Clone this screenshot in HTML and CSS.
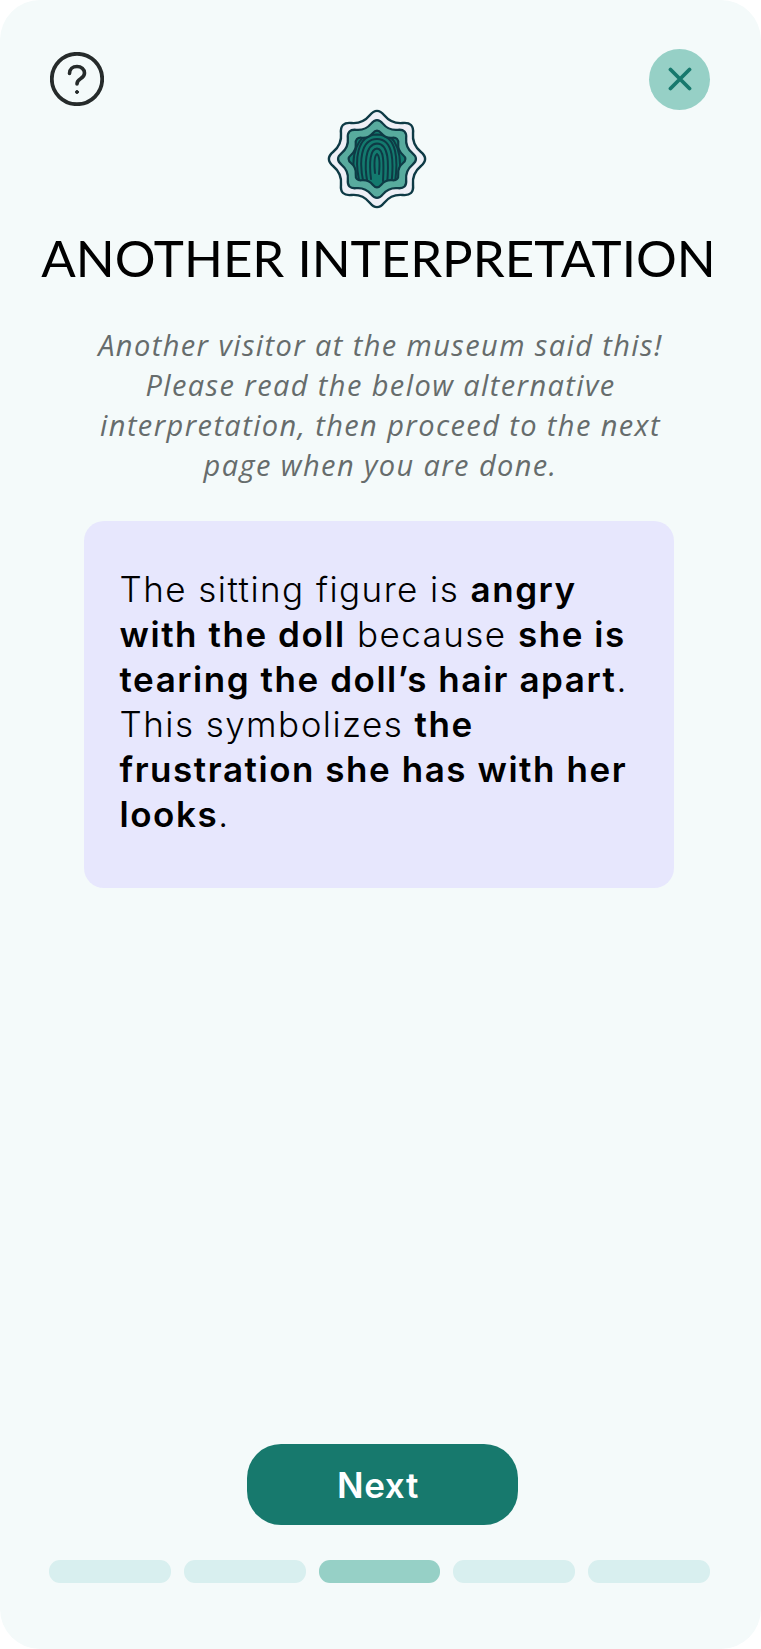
FILE: index.html
```html
<!DOCTYPE html>
<html lang="en">
<head>
<meta charset="utf-8">
<title>Another Interpretation</title>
<link rel="stylesheet" href="styles.css">
</head>
<body>
<main class="screen">
  <header class="topbar">
    <button class="help" aria-label="Help">
      <svg viewBox="0 0 54 54" width="54" height="54" fill="none" stroke="#262b2b" stroke-linecap="round" stroke-linejoin="round">
        <circle cx="27" cy="27" r="25.200" stroke-width="3.800"/>
        <path d="M19.500 21.500c0-4.200 3.300-7 7.500-7 4.300 0 7.500 2.800 7.500 6.500 0 3-1.800 4.500-4 5.800-2.300 1.400-3.500 2.600-3.500 5.200" stroke-width="3.600"/>
        <circle cx="27" cy="40" r="1.500" fill="#262b2b" stroke-width="1"/>
      </svg>
    </button>
    <button class="close" aria-label="Close">
      <svg viewBox="0 0 24 24" width="24" height="24" fill="none" stroke="#17796d" stroke-width="3.800" stroke-linecap="round">
        <path d="M2.500 2.500l19 19M21.500 2.500l-19 19"/>
      </svg>
    </button>
  </header>
  <div class="badge">
    <svg viewBox="0 0 100 100" width="100" height="100">
      <defs>
        <path id="star" d="M-13.78-83.26Q0-100 13.78-83.26Q27.55-66.52 49.13-68.62Q70.71-70.71 68.62-49.13Q66.52-27.55 83.26-13.78Q100 0 83.26 13.78Q66.52 27.55 68.62 49.13Q70.71 70.71 49.13 68.62Q27.55 66.52 13.78 83.26Q0 100-13.78 83.26Q-27.55 66.52-49.13 68.62Q-70.71 70.71-68.62 49.13Q-66.52 27.55-83.26 13.78Q-100 0-83.26-13.78Q-66.52-27.55-68.62-49.13Q-70.71-70.71-49.13-68.62Q-27.55-66.52-13.78-83.26Z"/>
        <clipPath id="print"><use href="#star" transform="translate(50 50) scale(.31)"/></clipPath>
      </defs>
      <use href="#star" transform="translate(50 50) scale(.525)" fill="#eeeff6" stroke="#0e3a45" stroke-width="4.600"/>
      <use href="#star" transform="translate(50 50) scale(.425)" fill="#58ab9e" stroke="#0e3a45" stroke-width="5.400"/>
      <use href="#star" transform="translate(50 50) scale(.31)" fill="#137a6e" stroke="#0e3a45" stroke-width="7"/>
      <g clip-path="url(#print)" fill="none" stroke="#0e3a45" stroke-width="2" stroke-linecap="round">
        <path d="M48 64C47 54 47 47 50 45C53 47 53 54 52 65"/>
        <path d="M44 70C42 54 43 40 50 39.500C57 40 57 54 56 72"/>
        <path d="M40.500 74C37 56 38 35 50 34.500C62 35 62 54 60 76"/>
        <path d="M36.500 74C32 54 33 30 50 30C67 30 67 54 64 78"/>
        <path d="M32 71C28 52 29 26 50 25.500C71 26 71 52 68 74"/>
        <path d="M27 62C25 48 28 26 50 21C72 26 75 48 72 68"/>
      </g>
    </svg>
  </div>
  <h1 class="title">ANOTHER INTERPRETATION</h1>
  <p class="intro">Another visitor at the museum said this! Please read the below alternative interpretation, then proceed to the next page when you are done.</p>
  <section class="card">
    <p>The sitting figure is <b>angry with the doll</b> because <b>she is tearing the doll’s hair apart</b>. This symbolizes <b>the frustration she has with her looks</b>.</p>
  </section>
  <footer class="foot">
    <button class="next">Next</button>
    <div class="steps">
      <span class="step"></span>
      <span class="step"></span>
      <span class="step on"></span>
      <span class="step"></span>
      <span class="step"></span>
    </div>
  </footer>
</main>
</body>
</html>
```
FILE: styles.css
```css
* { box-sizing: border-box; }
html, body { margin: 0; padding: 0; background: #fff; }
.screen {
  width: 761px;
  height: 1649px;
  background: #f4fafa;
  border-radius: 40px;
  display: flex;
  flex-direction: column;
  align-items: center;
  font-family: "Inter", sans-serif;
  color: #000;
  overflow: hidden;
}
button { border: 0; padding: 0; background: none; font: inherit; }
.topbar {
  width: 100%;
  height: 62px;
  margin-top: 48px;
  padding: 0 51px 0 50px;
  display: flex;
  justify-content: space-between;
  align-items: center;
}
.help { width: 54px; height: 54px; }
.help svg, .close svg { display: block; }
.close {
  width: 61px;
  height: 61px;
  border-radius: 50%;
  background: #96d0c6;
  display: flex;
  align-items: center;
  justify-content: center;
}
.badge { height: 100px; margin: -1px 8px 0 0; }
.badge svg { display: block; }
.title {
  margin: 19px 4px 0 0;
  font-size: 51px;
  line-height: 60px;
  font-weight: 400;
  white-space: nowrap;
  font-family: "Lato", sans-serif;
}
.intro {
  width: 590px;
  margin: 37px 0 0;
  font-family: "Open Sans", sans-serif;
  font-size: 29px;
  line-height: 40px;
  letter-spacing: 1.400px;
  font-style: italic;
  text-align: center;
  color: #666c6c;
}
.card {
  width: 590px;
  height: 367px;
  margin: 36px 0 0 -4px;
  padding: 46px 30px 46px 36px;
  border-radius: 20px;
  background: #e7e7fd;
}
.card p {
  margin: 0;
  font-size: 35px;
  line-height: 45px;
  letter-spacing: 1.450px;
  font-weight: 300;
}
.card b { font-weight: 600; letter-spacing: 1.550px; }
.foot {
  margin-top: auto;
  width: 100%;
  padding: 0 51px 66px 49px;
  display: flex;
  flex-direction: column;
  align-items: center;
}
.next {
  width: 271px;
  height: 81px;
  padding-right: 8px;
  margin-left: 5px;
  border-radius: 34px;
  background: #17796d;
  color: #fff;
  font-family: "Inter", sans-serif;
  font-size: 35px;
  font-weight: 600;
  letter-spacing: 0.600px;
}
.steps {
  width: 100%;
  margin-top: 35px;
  display: grid;
  grid-template-columns: repeat(5, 1fr);
  gap: 13px;
}
.step { height: 23px; border-radius: 11px; background: #d8efef; }
.step.on { background: #96d0c6; }
```
